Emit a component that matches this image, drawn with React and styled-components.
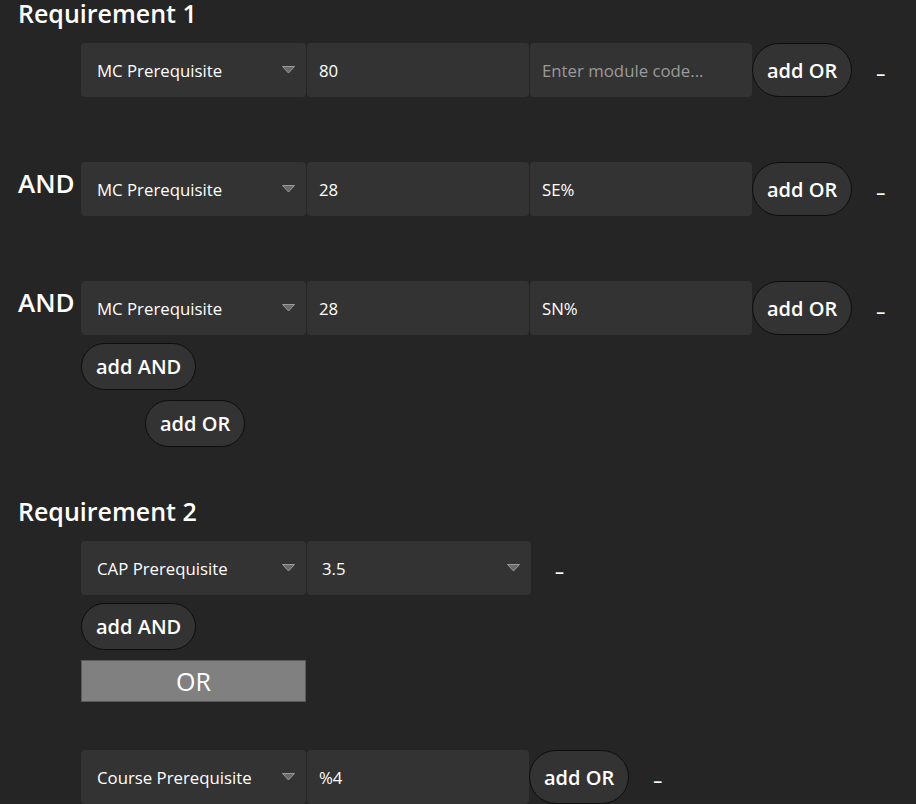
import styled, { createGlobalStyle } from 'styled-components';

const GlobalStyle = createGlobalStyle`
  body {
    margin: 0;
    background-color: #252525;
    color: #fff;
    font-family: 'Open Sans', 'Noto Sans', sans-serif;
  }
`;

const Page = styled.div`
  padding-left: 18px;
`;

const Heading = styled.h2`
  margin: ${(p) => (p.$first ? '0' : '51px')} 0 16px;
  font-size: 25px;
  font-weight: 600;
  line-height: 27px;
`;

const Row = styled.div`
  display: flex;
  align-items: center;
  height: 54px;
  margin-bottom: ${(p) => p.$gap || 0}px;
`;

const Label = styled.div`
  width: 63px;
  align-self: flex-start;
  font-size: 26px;
  font-weight: 600;
  line-height: 42px;
`;

const Cells = styled.div`
  display: flex;
  gap: 1px;
  height: 54px;
`;

const SelectBox = styled.div`
  position: relative;
  box-sizing: border-box;
  width: ${(p) => p.$width || 225}px;
  height: 54px;
  display: flex;
  align-items: center;
  padding-left: ${(p) => p.$pad || 16}px;
  background-color: #333;
  border-radius: 4px;
  font-size: 16.8px;
`;

const Caret = styled.svg`
  position: absolute;
  right: 11px;
  top: 23px;
`;

const Field = styled.input`
  box-sizing: border-box;
  width: 222px;
  height: 54px;
  padding: 0 12px;
  border: none;
  outline: none;
  background-color: #333;
  border-radius: 4px;
  color: #fff;
  font-family: inherit;
  font-size: 16.8px;

  &::placeholder {
    color: #9a9a9a;
  }
`;

const Pill = styled.button`
  box-sizing: border-box;
  height: ${(p) => p.$height || 47}px;
  margin-left: ${(p) => p.$indent || 0}px;
  padding: 0 14px;
  background-color: #333;
  border: 1px solid #0d0d0d;
  border-radius: 999px;
  color: #fff;
  font-family: inherit;
  font-size: 20px;
  font-weight: 600;
  white-space: nowrap;
`;

const Stack = styled.div`
  display: flex;
  flex-direction: column;
  align-items: flex-start;
  gap: 10px;
  margin-top: 8px;
`;

const Minus = styled.span`
  margin-left: 24px;
  font-size: 18px;
  font-weight: 600;
  padding-top: 5px;
`;

const OrBar = styled.div`
  box-sizing: border-box;
  width: 225px;
  height: 42px;
  margin: 10px 0 48px 63px;
  display: flex;
  align-items: center;
  justify-content: center;
  background-color: #808080;
  border: 1px solid #5a5a5a;
  font-size: 25px;
`;

function Select({ children, width, pad }) {
  return (
    <SelectBox $width={width} $pad={pad}>
      {children}
      <Caret width='13' height='8' viewBox='0 0 13 8'>
        <path d='M0.5 0.5 H12.5 L6.5 7 Z' fill='#6a6a6a' stroke='#9a9a9a' strokeWidth='1' />
      </Caret>
    </SelectBox>
  );
}

function Condition({ label, type, value, code, gap }) {
  return (
    <Row $gap={gap}>
      <Label>{label}</Label>
      <Cells>
        <Select>{type}</Select>
        <Field defaultValue={value} />
        <Field defaultValue={code} placeholder='Enter module code...' />
      </Cells>
      <Pill $height={54}>add OR</Pill>
      <Minus>–</Minus>
    </Row>
  );
}

function App() {
  return (
    <Page>
      <GlobalStyle />
      <Heading $first>Requirement 1</Heading>
      <Condition type='MC Prerequisite' value='80' code='' gap={65} />
      <Condition label='AND' type='MC Prerequisite' value='28' code='SE%' gap={65} />
      <Condition label='AND' type='MC Prerequisite' value='28' code='SN%' />
      <Stack>
        <Pill $indent={63}>add AND</Pill>
        <Pill $indent={127}>add OR</Pill>
      </Stack>

      <Heading>Requirement 2</Heading>
      <Row>
        <Label />
        <Cells>
          <Select>CAP Prerequisite</Select>
          <Select width={224} pad={15}>3.5</Select>
        </Cells>
        <Minus>–</Minus>
      </Row>
      <Stack>
        <Pill $indent={63}>add AND</Pill>
      </Stack>
      <OrBar>OR</OrBar>
      <Row>
        <Label />
        <Cells>
          <Select>Course Prerequisite</Select>
          <Field defaultValue='%4' />
        </Cells>
        <Pill $height={54}>add OR</Pill>
        <Minus>–</Minus>
      </Row>
    </Page>
  );
}

export default App;
